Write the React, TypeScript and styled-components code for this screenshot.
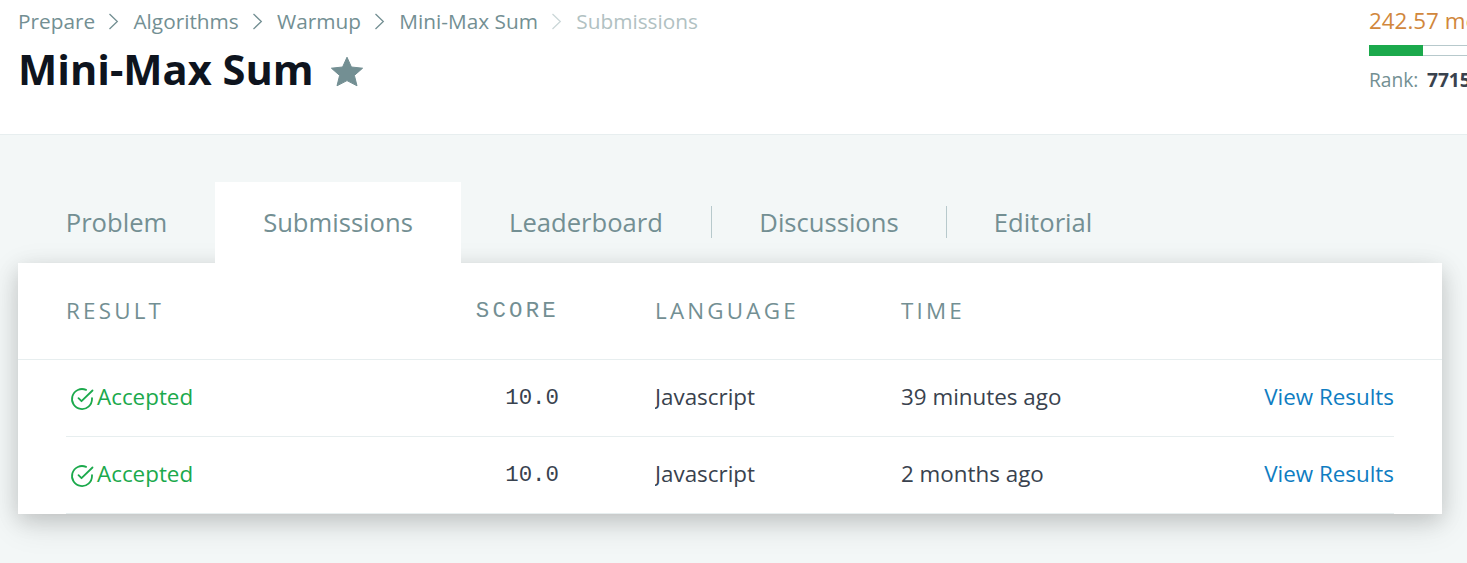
import React from "react";
import styled, { createGlobalStyle } from "styled-components";

const GlobalStyle = createGlobalStyle`
  *, *::before, *::after { box-sizing: border-box; }
  html, body { margin: 0; padding: 0; overflow: hidden; }
  body { background: #f3f7f7; font-family: "Open Sans", sans-serif; color: #39424e; }
`;

const Page = styled.div`
  width: 100%;
  height: 100vh;
  overflow: hidden;
  display: flex;
  flex-direction: column;
  background: #f3f7f7;
`;

const Header = styled.header`
  height: 135px;
  flex: none;
  display: flex;
  justify-content: space-between;
  background: #fff;
  border-bottom: 1px solid #e7eeef;
  padding-left: 18px;
`;

const Heading = styled.div`
  display: flex;
  flex-direction: column;
`;

const Breadcrumbs = styled.nav`
  display: flex;
  align-items: center;
  height: 28px;
  padding-top: 14px;
`;

const Crumb = styled.span<{ $current?: boolean }>`
  font-size: 20.8px;
  line-height: 28px;
  white-space: nowrap;
  color: ${(p) => (p.$current ? "#b1c1c2" : "#738f93")};
`;

const Separator = styled.svg<{ $faint?: boolean }>`
  width: 11px;
  height: 17px;
  margin: 1px 14px 0 13.3px;
  fill: none;
  stroke: ${(p) => (p.$faint ? "#cbd7d8" : "#738f93")};
  stroke-width: 1.3;
`;

const TitleRow = styled.div`
  display: flex;
  align-items: center;
  gap: 16px;
  height: 56px;
  margin-top: 13px;
`;

const Title = styled.h1`
  margin: 0;
  font-size: 41.6px;
  line-height: 56px;
  font-weight: 700;
  color: #0e141e;
  white-space: nowrap;
`;

const Star = styled.svg`
  width: 34px;
  height: 31px;
  margin-top: 4px;
  fill: #738f93;
`;

const Standing = styled.aside`
  width: 98px;
  overflow: hidden;
  white-space: nowrap;
  padding-top: 6px;
`;

const Points = styled.div`
  font-size: 22.4px;
  line-height: 30px;
  color: #d1873c;
`;

const ProgressTrack = styled.div`
  width: 240px;
  height: 11px;
  margin-top: 9px;
  border: 1px solid #b7c9cc;
  border-left: 0;
`;

const ProgressFill = styled.div`
  width: 54px;
  height: 11px;
  margin-top: -1px;
  background: #1ba94c;
`;

const Rank = styled.div`
  margin-top: 11px;
  font-size: 19.2px;
  line-height: 26px;
  color: #738f93;
`;

const RankValue = styled.strong`
  margin-left: 8.5px;
  font-weight: 700;
  color: #39424e;
`;

const Content = styled.main`
  padding: 47px 25px 0 18px;
`;

const Tabs = styled.div`
  display: flex;
  height: 81px;
`;

const Tab = styled.div<{ $active?: boolean; $width: number }>`
  position: relative;
  z-index: ${(p) => (p.$active ? 1 : 0)};
  width: ${(p) => p.$width}px;
  height: 81px;
  line-height: 81px;
  text-align: center;
  font-size: 25.6px;
  color: #738f93;
  white-space: nowrap;
  background: ${(p) => (p.$active ? "#fff" : "transparent")};
`;

const Divider = styled.div`
  width: 1px;
  height: 32px;
  margin-top: 24px;
  background: #b7c9cc;
`;

const Card = styled.section`
  position: relative;
  height: 251px;
  background: #fff;
  box-shadow: 0 10px 32px rgba(0, 0, 0, 0.12), 0 6px 20px rgba(0, 0, 0, 0.13);
`;

const columns = "397px 96px 96px 246px 1fr auto";

const TableHead = styled.div`
  display: grid;
  grid-template-columns: ${columns};
  align-items: center;
  height: 97px;
  padding: 0 48px;
  border-bottom: 1px solid #e7eeef;
  font-size: 22.4px;
  letter-spacing: 3.2px;
  color: #738f93;
`;

const TableBody = styled.div`
  padding: 0 48px;
`;

const TableRow = styled.div`
  display: grid;
  grid-template-columns: ${columns};
  align-items: center;
  height: 77px;
  padding-bottom: 2px;
  border-bottom: 1px solid #e7eeef;
  font-size: 22.4px;
`;

const Cell = styled.div<{ $start?: number }>`
  grid-column-start: ${(p) => p.$start ?? "auto"};
  white-space: nowrap;
  line-height: 32px;
`;

const ScoreCell = styled(Cell)<{ $drop?: boolean }>`
  font-family: "Liberation Mono", monospace;
  text-align: right;
  padding-top: ${(p) => (p.$drop ? 2 : 0)}px;
`;

const LanguageCell = styled(Cell)`
  overflow: hidden;
`;

const StatusCell = styled(Cell)`
  display: flex;
  align-items: center;
  color: #1ba94c;
`;

const CheckIcon = styled.svg`
  width: 24px;
  height: 24px;
  margin: 4px 3px 0 4px;
  fill: none;
  stroke: currentColor;
  stroke-width: 1.8;
  stroke-linecap: round;
  stroke-linejoin: round;
`;

const ResultLink = styled.a`
  color: #0f7dc2;
`;

const trail = ["Prepare", "Algorithms", "Warmup", "Mini-Max Sum", "Submissions"];

const submissions = [
  { score: "10.0", language: "Javascript", time: "39 minutes ago" },
  { score: "10.0", language: "Javascript", time: "2 months ago" },
];

export default function App() {
  return (
    <Page>
      <GlobalStyle />
      <Header>
        <Heading>
          <Breadcrumbs>
            {trail.map((name, i) => {
              const current = i === trail.length - 1;
              return (
                <React.Fragment key={name}>
                  {i > 0 && (
                    <Separator viewBox="0 0 11 17" $faint={current}>
                      <path d="M1.5 1 L9.3 8.5 L1.5 16" />
                    </Separator>
                  )}
                  <Crumb $current={current}>{name}</Crumb>
                </React.Fragment>
              );
            })}
          </Breadcrumbs>
          <TitleRow>
            <Title>Mini-Max Sum</Title>
            <Star viewBox="0 0 34 31">
              <path
                d="M17 1.2 L21.4 11 L32.6 12.2 L24.4 19.4 L27 29.8 L17 24.6 L7 29.8 L9.6 19.4 L1.4 12.2 L12.6 11 Z"
                stroke="#738f93"
                strokeWidth="1"
                strokeLinejoin="round"
              />
            </Star>
          </TitleRow>
        </Heading>
        <Standing>
          <Points>242.57 mo</Points>
          <ProgressTrack>
            <ProgressFill />
          </ProgressTrack>
          <Rank>
            Rank:<RankValue>7715</RankValue>
          </Rank>
        </Standing>
      </Header>
      <Content>
        <Tabs>
          <Tab $width={197}>Problem</Tab>
          <Tab $width={246} $active>
            Submissions
          </Tab>
          <Tab $width={250}>Leaderboard</Tab>
          <Divider />
          <Tab $width={234}>Discussions</Tab>
          <Divider />
          <Tab $width={192}>Editorial</Tab>
        </Tabs>
        <Card>
          <TableHead>
            <Cell>RESULT</Cell>
            <ScoreCell>SCORE</ScoreCell>
            <Cell $start={4}>LANGUAGE</Cell>
            <Cell>TIME</Cell>
          </TableHead>
          <TableBody>
            {submissions.map((s) => (
              <TableRow key={s.time}>
                <StatusCell>
                  <CheckIcon viewBox="0 0 24 24">
                    <path d="M22 11.1V12a10 10 0 1 1-5.9-9.1" />
                    <path d="M22.5 3.5 L11.5 14.2 L8.5 11.2" />
                  </CheckIcon>
                  Accepted
                </StatusCell>
                <ScoreCell $drop>{s.score}</ScoreCell>
                <LanguageCell $start={4}>{s.language}</LanguageCell>
                <Cell>{s.time}</Cell>
                <Cell>
                  <ResultLink>View Results</ResultLink>
                </Cell>
              </TableRow>
            ))}
          </TableBody>
        </Card>
      </Content>
    </Page>
  );
}
